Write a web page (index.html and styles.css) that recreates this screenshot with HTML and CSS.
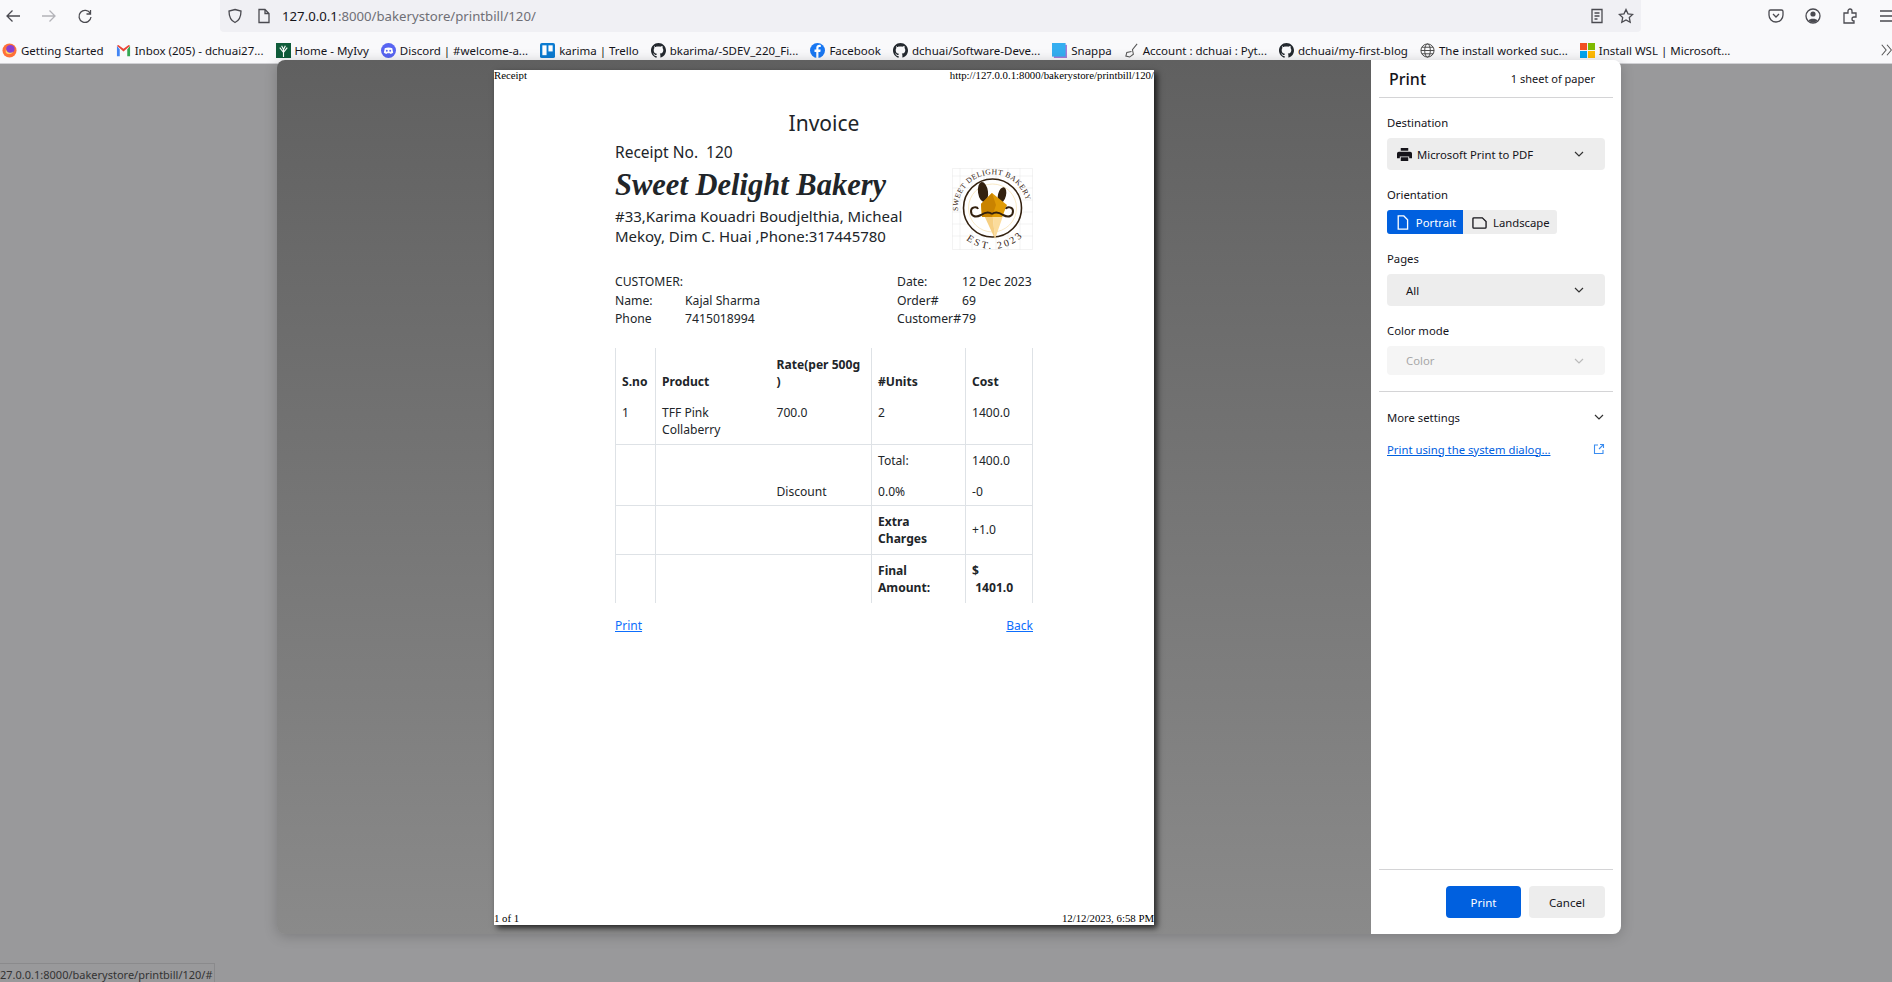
FILE: index.html
```html
<!DOCTYPE html>
<html lang="en">
<head>
  <meta charset="UTF-8" />
  <title>Print - Invoice</title>
  <link rel="stylesheet" href="styles.css">
</head>
<body>

  <!-- Browser toolbar -->
  <div class="toolbar">
    <svg class="icon" viewBox="0 0 16 16"><path d="M15 8H2M7.500 2.500 2 8l5.500 5.500"/></svg>
    <svg class="icon faded" viewBox="0 0 16 16"><path d="M1 8h13M8.500 2.500 14 8l-5.500 5.500"/></svg>
    <svg class="icon" viewBox="0 0 16 16"><path d="M13.500 2v4h-4M13.300 5.500A6 6 0 1 0 14 9"/></svg>
    <div class="urlbar">
      <svg class="icon" viewBox="0 0 16 16"><path d="M8 1.500 14 3c0 6-1.500 9.500-6 11.500C3.500 12.500 2 9 2 3z"/></svg>
      <svg class="icon" viewBox="0 0 16 16"><path d="M3 1.500h6l4 4v9H3zM9 1.500v4h4"/></svg>
      <span class="url"><b>127.0.0.1</b>:8000/bakerystore/printbill/120/</span>
      <svg class="icon url-first" viewBox="0 0 16 16"><path d="M3 1.500h10v13H3zM5.500 5h5M5.500 8h5M5.500 11h3"/></svg>
      <svg class="icon" viewBox="0 0 16 16"><path d="m8 1.500 2 4.300 4.700.6-3.400 3.200.9 4.700L8 12l-4.200 2.300.9-4.700L1.300 6.400 6 5.800z"/></svg>
    </div>
    <div class="actions">
      <svg class="icon" viewBox="0 0 16 16"><path d="M2.500 2h11A1.500 1.500 0 0 1 15 3.500V7a7 7 0 0 1-14 0V3.500A1.500 1.500 0 0 1 2.500 2zM5 6l3 3 3-3"/></svg>
      <svg class="icon" viewBox="0 0 16 16"><circle cx="8" cy="8" r="7"/><circle class="solid" cx="8" cy="6" r="2.600"/><path class="solid" d="M3.500 12.500C4.500 10 11.500 10 12.500 12.500 10 15 6 15 3.500 12.500z"/></svg>
      <svg class="icon" viewBox="0 0 16 16"><path d="M2 5h4V3a2 2 0 0 1 4 0v2h4v4h-2a2 2 0 0 0 0 4h0v2H2z"/></svg>
      <svg class="icon" viewBox="0 0 16 16"><path d="M1 3h14M1 8h14M1 13h14"/></svg>
    </div>
  </div>

  <!-- Bookmarks -->
  <div class="bookmarks">
    <a class="mark">
      <svg viewBox="0 0 16 16"><circle cx="8" cy="8" r="7.500" fill="#ff7139"/><circle cx="9" cy="6.500" r="4.500" fill="#8a3fd1"/><path d="M4 5c0 5 5 7 8 4-1 3-6 4-8 1z" fill="#ffd567"/></svg>
      <span>Getting Started</span>
    </a>
    <a class="mark">
      <svg viewBox="0 0 16 16"><path d="M1 3v11h3V7z" fill="#4285f4"/><path d="M15 3v11h-3V7z" fill="#34a853"/><path d="M1 3l7 6 7-6-1.500-1L8 6 2.500 2z" fill="#ea4335"/></svg>
      <span>Inbox (205) - dchuai27...</span>
    </a>
    <a class="mark">
      <svg viewBox="0 0 16 16"><rect width="16" height="16" fill="#0f5c3a"/><path d="M8 15V7M8 10 4 5M8 10l4-5M8 7 6 3M8 7l2-4" stroke="#fff" stroke-width="1.200" fill="none"/></svg>
      <span>Home - MyIvy</span>
    </a>
    <a class="mark">
      <svg viewBox="0 0 16 16"><circle cx="8" cy="8" r="8" fill="#5865f2"/><path d="M4 5.500c2.500-1 5.500-1 8 0l1 5c-1 .8-2 1.200-2.800 1.300L9.500 10.800h-3L5.800 11.800C5 11.700 4 11.300 3 10.500z" fill="#fff"/><circle cx="6.200" cy="8.300" r="1" fill="#5865f2"/><circle cx="9.800" cy="8.300" r="1" fill="#5865f2"/></svg>
      <span>Discord | #welcome-a...</span>
    </a>
    <a class="mark">
      <svg viewBox="0 0 16 16"><rect width="16" height="16" rx="2" fill="#0c7bd1"/><rect x="2.500" y="2.500" width="4.500" height="10.500" fill="#fff"/><rect x="9" y="2.500" width="4.500" height="6.500" fill="#fff"/></svg>
      <span>karima | Trello</span>
    </a>
    <a class="mark">
      <svg viewBox="0 0 16 16"><use href="#gh"/></svg>
      <span>bkarima/-SDEV_220_Fi...</span>
    </a>
    <a class="mark">
      <svg viewBox="0 0 16 16"><circle cx="8" cy="8" r="8" fill="#1877f2"/><path d="M9 16V9.500h2l.4-2.500H9V5.500c0-.8.3-1.300 1.300-1.300h1.200V2c-2.700-.4-4.800.3-4.800 3.200V7H4.800v2.500h1.900V16z" fill="#fff"/></svg>
      <span>Facebook</span>
    </a>
    <a class="mark">
      <svg viewBox="0 0 16 16"><use href="#gh"/></svg>
      <span>dchuai/Software-Deve...</span>
    </a>
    <a class="mark">
      <svg viewBox="0 0 16 16"><rect x="2" y="2" width="14" height="14" fill="#a77bd8"/><rect width="14.500" height="14.500" fill="#35aef0"/></svg>
      <span>Snappa</span>
    </a>
    <a class="mark">
      <svg viewBox="0 0 16 16"><path d="M14 1 9 7l1 5-4 3-4-1 1-4 5-1" fill="none" stroke="#555" stroke-width="1.100"/></svg>
      <span>Account : dchuai : Pyt...</span>
    </a>
    <a class="mark">
      <svg viewBox="0 0 16 16"><use href="#gh"/></svg>
      <span>dchuai/my-first-blog</span>
    </a>
    <a class="mark">
      <svg viewBox="0 0 16 16"><g fill="none" stroke="#444" stroke-width="1"><circle cx="8" cy="8" r="7"/><ellipse cx="8" cy="8" rx="3" ry="7"/><path d="M1 8h14M2 4.500h12M2 11.500h12"/></g></svg>
      <span>The install worked suc...</span>
    </a>
    <a class="mark">
      <svg viewBox="0 0 16 16"><rect width="7.500" height="7.500" fill="#f25022"/><rect x="8.500" width="7.500" height="7.500" fill="#7fba00"/><rect y="8.500" width="7.500" height="7.500" fill="#00a4ef"/><rect x="8.500" y="8.500" width="7.500" height="7.500" fill="#ffb900"/></svg>
      <span>Install WSL | Microsoft...</span>
    </a>
    <svg class="more" viewBox="0 0 16 16"><path d="M2 2l5 6-5 6M8 2l5 6-5 6"/></svg>
  </div>

  <svg class="defs" width="0" height="0">
    <symbol id="gh" viewBox="0 0 16 16">
      <path fill="#24292f" d="M8 0C3.600 0 0 3.600 0 8c0 3.500 2.300 6.500 5.500 7.600.4.100.5-.2.500-.4v-1.400c-2.200.5-2.700-1-2.700-1-.4-.9-.9-1.200-.9-1.200-.7-.5.100-.5.100-.5.800.1 1.200.8 1.200.8.700 1.200 1.900.9 2.300.7.100-.5.300-.9.500-1.100-1.800-.2-3.600-.9-3.600-4 0-.9.300-1.600.8-2.100-.1-.2-.4-1 .1-2.100 0 0 .7-.2 2.200.8.600-.2 1.300-.3 2-.3s1.400.1 2 .3c1.500-1 2.200-.8 2.200-.8.400 1.100.2 1.900.1 2.100.5.600.8 1.300.8 2.100 0 3.100-1.900 3.700-3.700 3.900.3.300.6.700.6 1.500v2.200c0 .2.100.5.600.4C13.700 14.500 16 11.500 16 8c0-4.400-3.600-8-8-8z"/>
    </symbol>
  </svg>

  <!-- Print dialog -->
  <div class="dialog">
    <div class="preview">
      <div class="paper">
        <div class="page-line">
          <span>Receipt</span>
          <span>http://127.0.0.1:8000/bakerystore/printbill/120/</span>
        </div>

        <div class="bill">
          <h2 class="bill-title">Invoice</h2>
          <p class="receipt-no">Receipt No.&nbsp; 120</p>

          <div class="brand">
            <div class="brand-text">
              <h1>Sweet Delight Bakery</h1>
              <p>#33,Karima Kouadri Boudjelthia, Micheal Mekoy, Dim C. Huai ,Phone:317445780</p>
            </div>
            <svg class="logo" viewBox="0 0 81 82">
              <g stroke="#e6e6e6" stroke-width=".5" fill="none">
                <path d="M.5 .5h80v81H.5zM0 8h81M0 20h81M0 32h81M0 44h81M0 56h81M0 68h81M8 0v82M20 0v82M32 0v82M44 0v82M56 0v82M68 0v82"/>
              </g>
              <circle cx="40.500" cy="40" r="29" fill="#fff" stroke="#33210f" stroke-width="1.600"/>
              <circle cx="40.500" cy="40" r="24" fill="none" stroke="#f5dfae" stroke-width=".7"/>
              <path d="M40 40 43 71 52 45z" fill="#fbdc9c"/>
              <path d="M40 40 43 71 31 45z" fill="#f6cf82"/>
              <ellipse cx="31" cy="24" rx="5" ry="10" fill="#33210f" transform="rotate(-8 31 24)"/>
              <ellipse cx="50" cy="27" rx="4" ry="8" fill="#33210f" transform="rotate(14 50 27)"/>
              <path d="M40 25 55 37 50 49H30L29 36z" fill="#e09b05"/>
              <path d="M40 25 44 37 40 49H30L29 36z" fill="#c98300"/>
              <path d="M40 46c-4-3-8-1-11 1-6 3-10 1-10-4 0-4 6-5 7-2M40 46c4-3 8-1 11 1 6 3 10 1 10-4 0-4-6-5-7-2" fill="none" stroke="#33210f" stroke-width="2"/>
              <path id="arcTop" d="M7 49a34.500 34.500 0 1 1 67 0" fill="none"/>
              <path id="arcBottom" d="M12 59a35 35 0 0 0 57 0" fill="none"/>
              <text class="logo-text"><textPath href="#arcTop" startOffset="6">SWEET DELIGHT BAKERY</textPath></text>
              <text class="logo-text big"><textPath href="#arcBottom" startOffset="9" dominant-baseline="hanging">EST. 2023</textPath></text>
            </svg>
          </div>

          <div class="customer">
            <div class="cust-col">
              <div>CUSTOMER:</div>
              <div class="cust-row"><span class="k-left">Name:</span><span>Kajal Sharma</span></div>
              <div class="cust-row"><span class="k-left">Phone</span><span>7415018994</span></div>
            </div>
            <div class="cust-col">
              <div class="cust-row"><span class="k-right">Date:</span><span>12 Dec 2023</span></div>
              <div class="cust-row"><span class="k-right">Order#</span><span>69</span></div>
              <div class="cust-row"><span class="k-right">Customer#</span><span>79</span></div>
            </div>
          </div>

          <table class="items">
            <colgroup>
              <col class="c1"><col class="c2"><col class="c3"><col class="c4"><col class="c5">
            </colgroup>
            <tr class="head">
              <th class="edge">S.no</th>
              <th>Product</th>
              <th class="nosep">Rate(per 500g<br>)</th>
              <th>#Units</th>
              <th class="end">Cost</th>
            </tr>
            <tr class="item">
              <td class="edge">1</td>
              <td>TFF Pink Collaberry</td>
              <td class="nosep">700.0</td>
              <td>2</td>
              <td class="end">1400.0</td>
            </tr>
            <tr class="line total">
              <td class="edge"></td>
              <td></td>
              <td class="nosep"></td>
              <td>Total:</td>
              <td class="end">1400.0</td>
            </tr>
            <tr class="disc">
              <td class="edge"></td>
              <td></td>
              <td class="nosep">Discount</td>
              <td>0.0%</td>
              <td class="end">-0</td>
            </tr>
            <tr class="line">
              <td class="edge"></td>
              <td></td>
              <td class="nosep"></td>
              <th>Extra Charges</th>
              <td class="end">+1.0</td>
            </tr>
            <tr class="line">
              <td class="edge"></td>
              <td></td>
              <td class="nosep"></td>
              <th>Final Amount:</th>
              <th class="end">$<br>&nbsp;1401.0</th>
            </tr>
          </table>

          <div class="links">
            <a href="#">Print</a>
            <a href="#">Back</a>
          </div>
        </div>

        <div class="page-line foot">
          <span>1 of 1</span>
          <span>12/12/2023, 6:58 PM</span>
        </div>
      </div>
    </div>

    <div class="panel">
      <div class="panel-head">
        <span class="panel-title">Print</span>
        <span class="sheets">1 sheet of paper</span>
      </div>

      <div class="panel-body">
        <label>Destination</label>
        <div class="select">
          <svg class="printer" viewBox="0 0 16 16"><path d="M4 1h8v3H4zM2 5h12a2 2 0 0 1 2 2v5h-3v-2H3v2H0V7a2 2 0 0 1 2-2zM4 11h8v4H4z"/></svg>
          <span>Microsoft Print to PDF</span>
          <svg class="chev" viewBox="0 0 12 12"><path d="M2 4l4 4 4-4"/></svg>
        </div>

        <label>Orientation</label>
        <div class="toggle">
          <div class="opt on">
            <svg viewBox="0 0 14 16"><path d="M2 1h6l4 4v10H2z"/></svg>
            <span>Portrait</span>
          </div>
          <div class="opt">
            <svg viewBox="0 0 16 14"><path d="M2 2h9l4 4v6a1 1 0 0 1-1 1H2a1 1 0 0 1-1-1V3a1 1 0 0 1 1-1z"/></svg>
            <span>Landscape</span>
          </div>
        </div>

        <label>Pages</label>
        <div class="select plain">
          <span>All</span>
          <svg class="chev" viewBox="0 0 12 12"><path d="M2 4l4 4 4-4"/></svg>
        </div>

        <label>Color mode</label>
        <div class="select plain off">
          <span>Color</span>
          <svg class="chev" viewBox="0 0 12 12"><path d="M2 4l4 4 4-4"/></svg>
        </div>
      </div>

      <div class="panel-more">
        <div class="more-row">
          <span>More settings</span>
          <svg class="chev" viewBox="0 0 12 12"><path d="M2 4l4 4 4-4"/></svg>
        </div>
        <div class="more-row sys">
          <a href="#">Print using the system dialog...</a>
          <svg class="ext" viewBox="0 0 12 12"><path d="M5 2H1.500v8.500H10V7M7 1.500h3.500V5M10.500 1.500 6 6"/></svg>
        </div>
      </div>

      <div class="panel-foot">
        <button class="btn primary">Print</button>
        <button class="btn">Cancel</button>
      </div>
    </div>
  </div>

  <div class="status">27.0.0.1:8000/bakerystore/printbill/120/#</div>

</body>
</html>
```

FILE: styles.css
```css
html, body {
  height: 100%;
}

body {
  margin: 0;
  overflow: hidden;
  background: #99999b;
  font-family: "Noto Sans", sans-serif;
  color: #15141a;
  position: relative;
}

.defs {
  position: absolute;
}

/* Toolbar */
.toolbar {
  height: 32px;
  display: flex;
  align-items: center;
  gap: 20px;
  padding-left: 5px;
  background: #f9f9fb;
  width: 1920px;
}

.icon {
  width: 16px;
  height: 16px;
  flex: none;
  fill: none;
  stroke: #4a4a50;
  stroke-width: 1.300;
}

.icon .solid {
  fill: #4a4a50;
  stroke: none;
}

.icon.faded {
  stroke: #b3b3b8;
}

.urlbar {
  width: 1421px;
  height: 32px;
  box-sizing: border-box;
  margin: 0 107px;
  padding: 0 7px 0 7px;
  background: #f0f0f4;
  border-radius: 0 0 4px 4px;
  display: flex;
  align-items: center;
  gap: 13px;
}

.url {
  font-size: 13.200px;
  color: #6f6f76;
  margin-left: -3px;
}

.url b {
  font-weight: 400;
  color: #15141a;
}

.url-first {
  margin-left: auto;
}

.actions {
  display: flex;
  gap: 21px;
}

/* Bookmarks */
.bookmarks {
  height: 32px;
  box-sizing: border-box;
  border-bottom: 1px solid #d0d0d4;
  background: #f9f9fb;
  display: flex;
  align-items: center;
  gap: 12px;
  padding: 5px 0 0 2px;
  font-size: 11.500px;
  white-space: nowrap;
}

.mark {
  display: flex;
  align-items: center;
  gap: 4px;
}

.mark svg {
  width: 15px;
  height: 15px;
  flex: none;
}

.more {
  position: absolute;
  right: -2px;
  top: 42px;
  width: 14px;
  height: 16px;
  fill: none;
  stroke: #555;
  stroke-width: 1.200;
}

/* Dialog */
.dialog {
  position: absolute;
  left: 277px;
  top: 60px;
  width: 1344px;
  height: 874px;
  display: flex;
  box-shadow: 0 2px 14px rgba(0, 0, 0, 0.2);
  border-radius: 8px;
}

.preview {
  flex: 1;
  background: linear-gradient(#606060, #8a8a8a);
  border-radius: 8px 0 0 8px;
  padding: 10px 217px 0;
}

.paper {
  width: 660px;
  height: 855px;
  background: #fff;
  box-shadow: 3px 3px 6px rgba(0, 0, 0, 0.75);
  display: flex;
  flex-direction: column;
  position: relative;
}

.page-line {
  display: flex;
  justify-content: space-between;
  font-family: "Liberation Serif", serif;
  font-size: 10.800px;
  line-height: 11px;
  color: #000;
}

.page-line.foot {
  margin-top: auto;
  padding-bottom: 1px;
}

/* Bill */
.bill {
  width: 418px;
  margin-left: 121px;
  color: #212529;
}

.bill-title {
  margin: 27px 0 0;
  font-size: 21px;
  line-height: 30px;
  font-weight: 400;
  text-align: center;
}

.receipt-no {
  margin: 3px 0 0;
  font-size: 15.500px;
  line-height: 22px;
}

.brand {
  display: flex;
  justify-content: space-between;
}

.brand-text {
  width: 300px;
}

.brand-text h1 {
  margin: 4px 0 0;
  font-family: "Liberation Serif", serif;
  font-style: italic;
  font-weight: 700;
  font-size: 30.500px;
  line-height: 36px;
}

.brand-text p {
  margin: 3px 0 0;
  font-size: 15px;
  line-height: 20px;
}

.logo {
  width: 81px;
  height: 82px;
  flex: none;
  margin-top: 5px;
}

.logo-text {
  font-family: "Liberation Serif", serif;
  font-size: 7.600px;
  letter-spacing: 0.500px;
  fill: #33210f;
}

.logo-text.big {
  font-size: 10px;
  letter-spacing: 1.200px;
}

.customer {
  display: flex;
  justify-content: space-between;
  margin-top: 23px;
  font-size: 12.200px;
  line-height: 18.500px;
  white-space: nowrap;
}

.cust-col:last-child {
  width: 136px;
}

.cust-row {
  display: flex;
}

.k-left {
  width: 70px;
}

.k-right {
  width: 65px;
}

/* Items */
.items {
  width: 417px;
  margin-top: 19px;
  table-layout: fixed;
  border-collapse: collapse;
  font-size: 12.100px;
  line-height: 17px;
}

.c1 { width: 40px; }
.c2 { width: 115px; }
.c3 { width: 101px; }
.c4 { width: 94px; }
.c5 { width: 67px; }

.items th, .items td {
  padding: 7px 6px;
  border-right: 1px solid #dee2e6;
  vertical-align: bottom;
  text-align: left;
  font-weight: 400;
}

.items th {
  font-weight: 700;
}

.items .edge {
  border-left: 1px solid #dee2e6;
}

.items .nosep {
  padding-right: 0;
  white-space: nowrap;
}

.items td:nth-child(2), .items th:nth-child(2) {
  border-right: none;
}

.head th {
  padding-top: 8px;
  padding-bottom: 7px;
}

.item td {
  vertical-align: top;
  padding-bottom: 6px;
}

.line td, .line th {
  border-top: 1px solid #dee2e6;
  vertical-align: middle;
}

.total td {
  padding-top: 7px;
}

.disc td {
  padding-top: 7px;
  padding-bottom: 5px;
}

.links {
  display: flex;
  justify-content: space-between;
  margin-top: 14px;
  font-size: 12px;
  line-height: 18px;
}

.links a {
  color: #0d6efd;
}

/* Side panel */
.panel {
  width: 250px;
  background: #fff;
  border-radius: 0 8px 8px 0;
  display: flex;
  flex-direction: column;
  font-size: 11.300px;
}

.panel-head {
  height: 37px;
  margin: 0 8px;
  padding: 0 18px 0 10px;
  border-bottom: 1px solid #d4d4d6;
  display: flex;
  justify-content: space-between;
  align-items: center;
}

.panel-title {
  font-size: 16px;
  font-weight: 500;
}

.sheets {
  font-size: 11px;
}

.panel-body {
  padding: 0 16px;
}

.panel-body label {
  display: block;
  margin: 16px 0 6px;
  line-height: 18px;
}

.select {
  height: 32px;
  background: #ededed;
  border-radius: 4px;
  display: flex;
  align-items: center;
  padding: 0 20px 0 10px;
  box-sizing: border-box;
}

.select.plain {
  padding-left: 19px;
}

.select.off {
  height: 29px;
  background: #f5f5f5;
  color: #a8a8a8;
}

.printer {
  width: 15px;
  height: 15px;
  fill: #15141a;
  margin-right: 5px;
}

.chev {
  width: 12px;
  height: 12px;
  margin-left: auto;
  fill: none;
  stroke: #333;
  stroke-width: 1.200;
}

.select.off .chev {
  stroke: #bbb;
}

.toggle {
  display: inline-flex;
  height: 24px;
  background: #ededed;
  border-radius: 3px;
}

.opt {
  display: flex;
  align-items: center;
  gap: 6px;
  padding: 0 7px 0 9px;
  border-radius: 3px 0 0 3px;
}

.opt svg {
  width: 15px;
  height: 15px;
  fill: none;
  stroke: #15141a;
  stroke-width: 1.400;
}

.opt.on {
  width: 76px;
  box-sizing: border-box;
  background: #0060df;
  color: #fff;
}

.opt.on svg {
  stroke: #fff;
}

.panel-more {
  margin: 16px 8px 0;
  padding: 0 8px;
  border-top: 1px solid #d4d4d6;
}

.more-row {
  display: flex;
  align-items: center;
  height: 18px;
  margin-top: 16px;
}

.more-row.sys {
  margin-top: 14px;
}

.more-row a {
  color: #0060df;
}

.ext {
  width: 12px;
  height: 12px;
  margin-left: auto;
  fill: none;
  stroke: #3b8df0;
  stroke-width: 1.100;
}

.panel-foot {
  margin: auto 8px 0;
  padding: 16px 8px;
  border-top: 1px solid #d4d4d6;
  display: flex;
  justify-content: flex-end;
  gap: 8px;
}

.btn {
  width: 76px;
  height: 32px;
  border: none;
  border-radius: 4px;
  background: #ededed;
  font-family: inherit;
  font-size: 11.500px;
  color: #15141a;
}

.btn.primary {
  width: 75px;
  background: #0060df;
  color: #fff;
}

/* Status line */
.status {
  position: absolute;
  left: 0;
  bottom: 0;
  width: 215px;
  height: 19px;
  box-sizing: border-box;
  border-top: 1px solid #8a8a8c;
  border-right: 1px solid #8a8a8c;
  font-size: 11px;
  line-height: 22px;
  color: #333;
  white-space: nowrap;
  overflow: hidden;
}
```
